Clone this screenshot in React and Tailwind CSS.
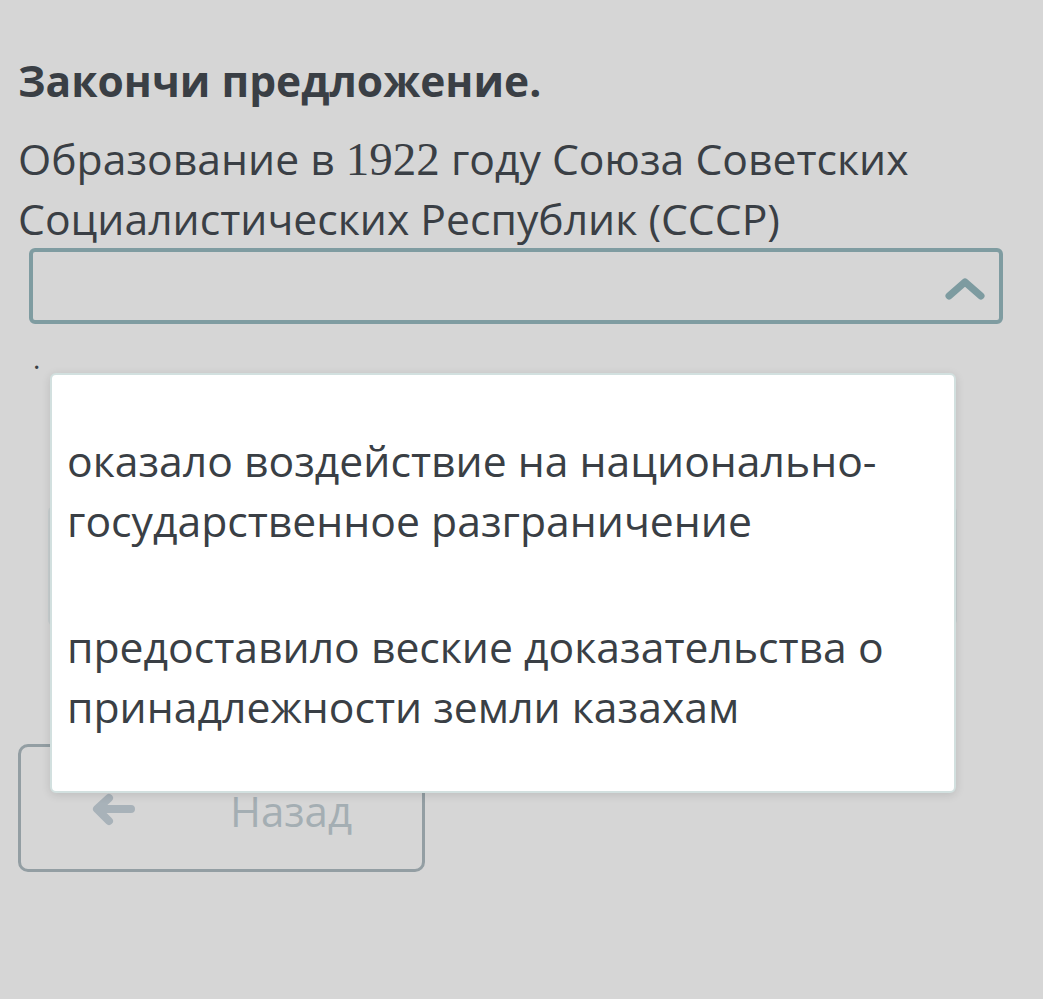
function Chevron() {
  return (
    <svg width="42" height="26" viewBox="0 0 42 26" fill="none">
      <path d="M5 20 L21 6 L37 20" stroke="#7d9ba0" strokeWidth="7" strokeLinecap="round" strokeLinejoin="round" />
    </svg>
  );
}

function BackArrow() {
  return (
    <svg width="44" height="34" viewBox="0 0 44 34" fill="none">
      <path d="M40 16 H8 M6 16 L18 5 M6 16 L18 28" stroke="#a8b2b9" strokeWidth="8" strokeLinecap="round" strokeLinejoin="round" />
    </svg>
  );
}

export default function App() {
  return (
    <div className="relative min-h-[999px] bg-[#d6d6d6] px-[18px] pt-[55px] font-['Open_Sans',sans-serif] text-[#3a3f45]">
      <h2 className="text-[42.5px] font-bold leading-[52px]">Закончи предложение.</h2>

      <p className="mt-[22px] text-[42.7px] leading-[59px]">
        Образование в <span className="font-['Liberation_Serif',serif] text-[47px]">1922</span> году Союза Советских
        <br />
        Социалистических Республик (СССР)
      </p>

      <div className="ml-[11px] mr-[22px] flex h-[76px] items-center justify-end rounded-[6px] border-[4px] border-[#7f9ca1] pr-[13px] pt-[6px]">
        <Chevron />
      </div>

      <div className="ml-[15px] mt-[24px] h-[20px] text-[28px] leading-[20px]">.</div>

      <div className="ml-[30px] mt-[138px] h-[120px] w-[909px] rounded-[6px] border-2 border-[#c8cfd0]"></div>

      <div className="mt-[118px] flex h-[128px] w-[407px] items-center rounded-[10px] border-[3px] border-[#939ea3] pl-[70px] pt-[4px]">
        <BackArrow />
        <span className="ml-[95px] text-[42px] text-[#a4aeb3]">Назад</span>
      </div>

      <div className="absolute left-[50px] top-[373px] flex h-[420px] w-[906px] flex-col gap-[66px] rounded-[6px] border-2 border-[#d2e0df] bg-white pl-[15px] pt-[56px] text-[42.7px] leading-[60px] shadow-[0_2px_10px_rgba(0,0,0,0.12)]">
        <div>
          оказало воздействие на национально-
          <br />
          государственное разграничение
        </div>
        <div>
          предоставило веские доказательства о
          <br />
          принадлежности земли казахам
        </div>
      </div>
    </div>
  );
}
